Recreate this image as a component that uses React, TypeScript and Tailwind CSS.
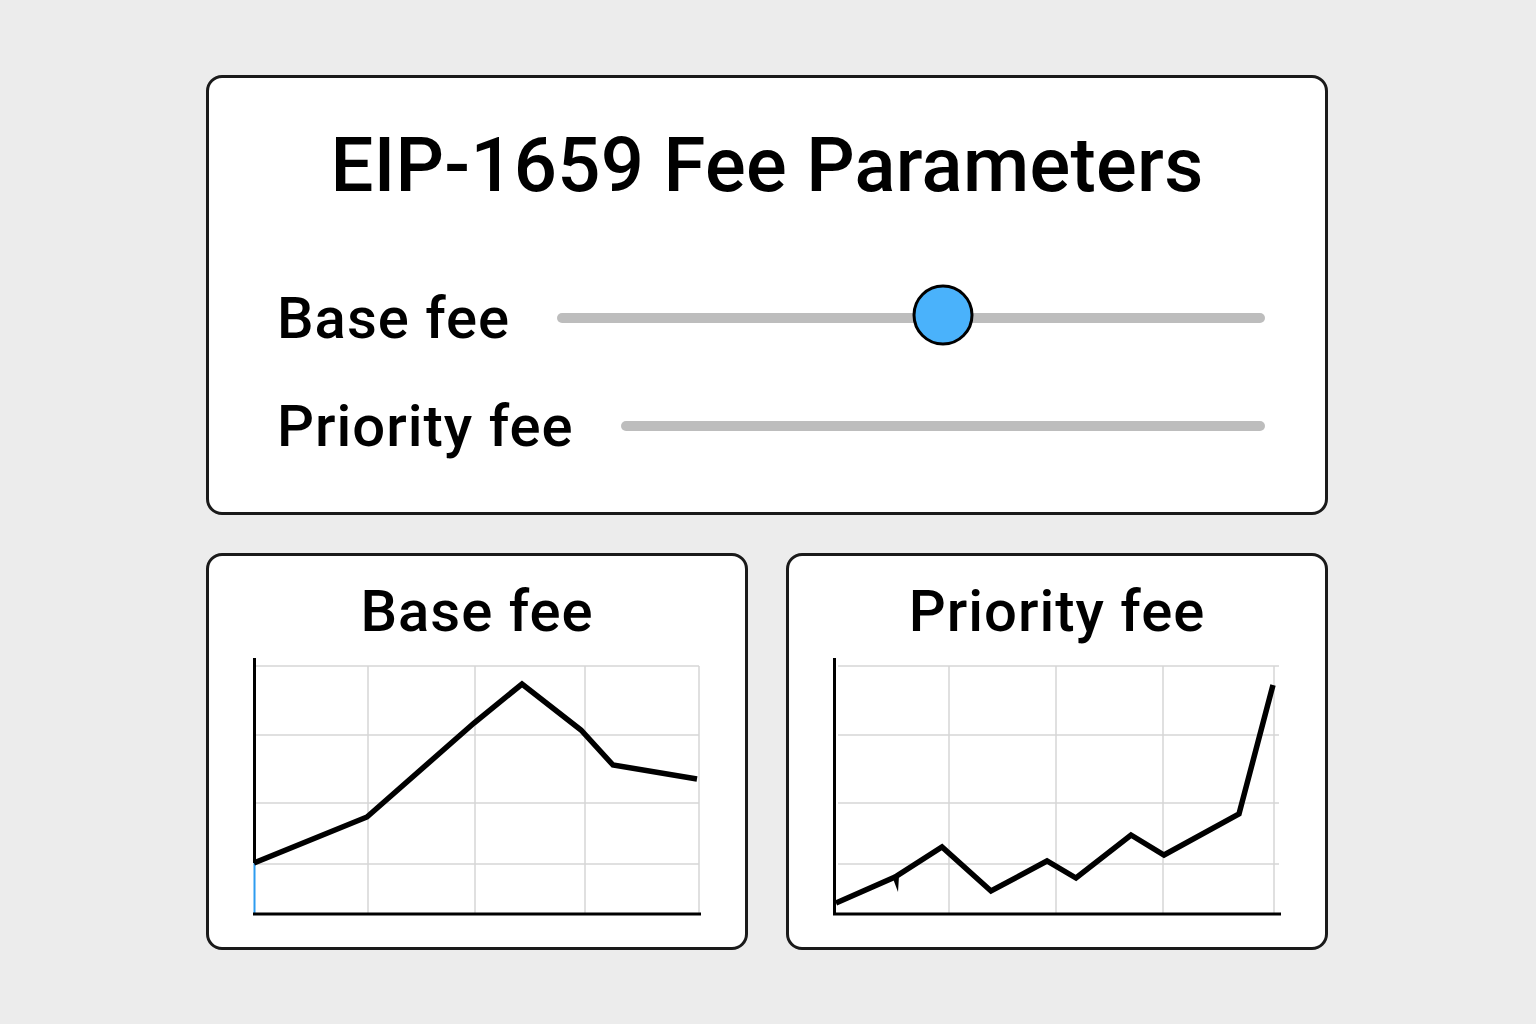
import React from "react";

type Pt = [number, number];

const toPoints = (pts: Pt[]) => pts.map(([x, y]) => `${x},${y}`).join(" ");

const baseFeeLine: Pt[] = [
  [5, 208],
  [118, 162],
  [225, 68],
  [273, 29],
  [332, 75],
  [364, 110],
  [448, 124],
];

const priorityFeeLine: Pt[] = [
  [7, 248],
  [66, 222],
  [113, 192],
  [162, 236],
  [218, 206],
  [247, 223],
  [302, 180],
  [335, 200],
  [410, 159],
  [444, 30],
];

const FeeSlider = ({ label, value }: { label: string; value?: number }) => {
  return (
    <div className="flex h-[58px] items-center gap-[47px]">
      <span className="text-[58px] font-medium leading-none tracking-[1px] whitespace-nowrap">
        {label}
      </span>
      <div className="relative h-[10px] flex-1 rounded-full bg-[#bdbdbd]">
        {value !== undefined && (
          <div
            className="absolute top-1/2 h-[61px] w-[61px] -translate-x-1/2 -translate-y-[55%] rounded-full border-[3px] border-black bg-[#4ab2fb]"
            style={{ left: `${value}%` }}
          />
        )}
      </div>
    </div>
  );
};

const FeeChart = ({
  title,
  points,
  gridX,
  gridLeft,
  marker,
}: {
  title: string;
  points: Pt[];
  gridX: number[];
  gridLeft: number;
  marker?: boolean;
}) => {
  const gridY = [11, 80, 148, 209];
  return (
    <div className="flex h-[397px] flex-col items-center rounded-2xl border-[3px] border-[#1a1a1a] bg-white pt-[26px]">
      <h2 className="text-[58px] font-medium leading-none tracking-[1px]">{title}</h2>
      <svg width="456" height="264" viewBox="0 0 456 264" className="mt-[15px]">
        {gridY.map((y) => (
          <line key={`h${y}`} x1={gridLeft} y1={y} x2={450} y2={y} stroke="#d6d6d6" strokeWidth="1.5" />
        ))}
        {gridX.map((x) => (
          <line key={`v${x}`} x1={x} y1={11} x2={x} y2={259} stroke="#d6d6d6" strokeWidth="1.5" />
        ))}
        {!marker && <line x1="5.5" y1="208" x2="5.5" y2="259" stroke="#2d9cf0" strokeWidth="2" />}
        <line x1="5.5" y1="3" x2="5.5" y2={marker ? 260 : 208} stroke="#000" strokeWidth="3" />
        <line x1="4" y1="259" x2="452" y2="259" stroke="#000" strokeWidth="3" />
        <polyline
          points={toPoints(points)}
          fill="none"
          stroke="#000"
          strokeWidth="5.5"
          strokeLinejoin="miter"
        />
        {marker && <path d="M63 221 L69 237 L70 221 Z" fill="#000" />}
      </svg>
    </div>
  );
};

export default function App() {
  return (
    <div
      className="min-h-screen w-full bg-[#ececec] pt-[75px] text-black"
      style={{ fontFamily: "Roboto, 'Liberation Sans', sans-serif" }}
    >
      <div className="ml-[206px] flex w-[1122px] flex-col gap-[38px]">
        <div className="flex h-[440px] flex-col rounded-2xl border-[3px] border-[#1a1a1a] bg-white pt-[49px] pl-[68px] pr-[60px]">
          <h1 className="pr-[8px] text-center text-[76px] font-medium leading-none tracking-[0.3px]">
            EIP-1659 Fee Parameters
          </h1>
          <div className="mt-[86px] flex flex-col gap-[50px]">
            <FeeSlider label="Base fee" value={54.5} />
            <FeeSlider label="Priority fee" />
          </div>
        </div>
        <div className="grid grid-cols-2 gap-[38px]">
          <FeeChart title="Base fee" points={baseFeeLine} gridX={[119, 226, 336, 450]} gridLeft={5} />
          <FeeChart
            title="Priority fee"
            points={priorityFeeLine}
            gridX={[120, 227, 334, 445]}
            gridLeft={9}
            marker
          />
        </div>
      </div>
    </div>
  );
}
